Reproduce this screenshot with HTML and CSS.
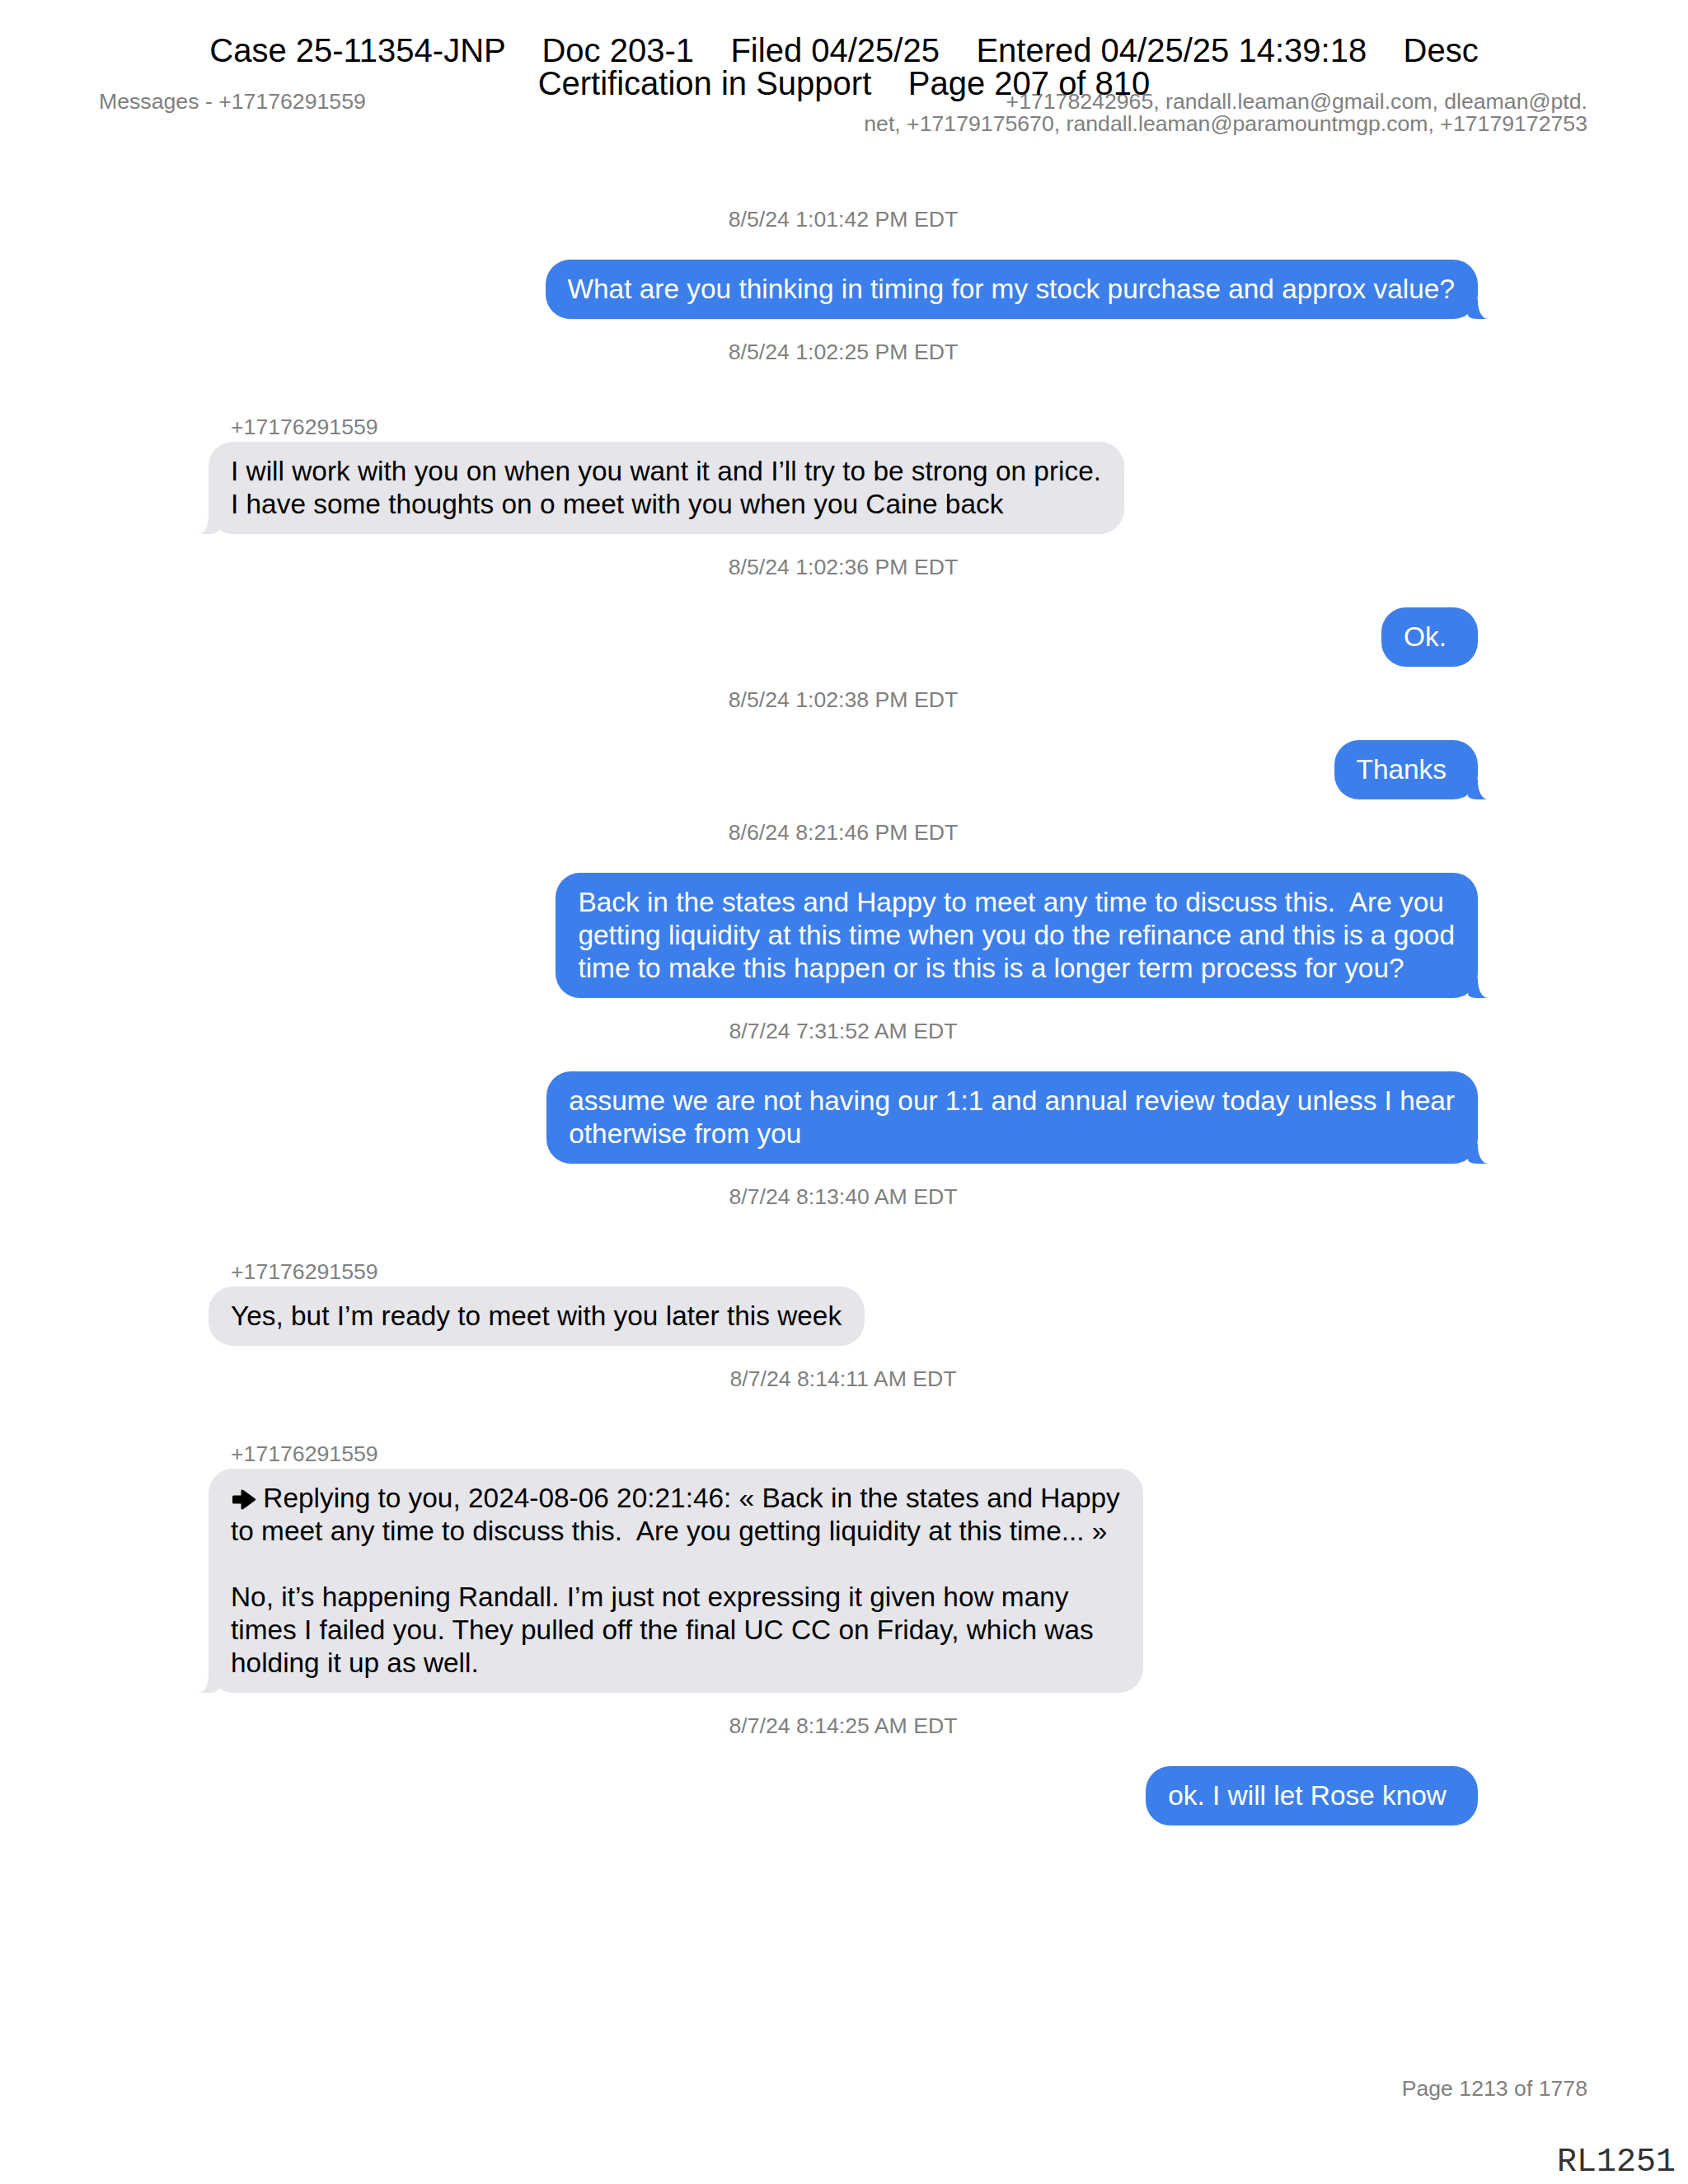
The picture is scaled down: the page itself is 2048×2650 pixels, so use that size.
FILE: index.html
```html
<!DOCTYPE html>
<html lang="en">
<head>
<meta charset="utf-8">
<title>Messages - +17176291559</title>
<link rel="stylesheet" href="styles.css">
</head>
<body>
<div class="page">
  <div class="stamp">
    <div class="stamp-line">Case 25-11354-JNP    Doc 203-1    Filed 04/25/25    Entered 04/25/25 14:39:18    Desc</div>
    <div class="stamp-line">Certification in Support    Page 207 of 810</div>
  </div>

  <header class="thread-head">
    <div class="thread-title">Messages - +17176291559</div>
    <div class="thread-contacts">+17178242965, randall.leaman@gmail.com, dleaman@ptd.<br>net, +17179175670, randall.leaman@paramountmgp.com, +17179172753</div>
  </header>

  <main class="chat">
    <div class="msg out">
      <div class="ts">8/5/24 1:01:42 PM EDT</div>
      <div class="bubble tail">What are you thinking in timing for my stock purchase and approx value?</div>
    </div>

    <div class="msg in">
      <div class="ts">8/5/24 1:02:25 PM EDT</div>
      <div class="sender">+17176291559</div>
      <div class="bubble tail">I will work with you on when you want it and I’ll try to be strong on price.<br>I have some thoughts on o meet with you when you Caine back</div>
    </div>

    <div class="msg out">
      <div class="ts">8/5/24 1:02:36 PM EDT</div>
      <div class="bubble trailing">Ok.</div>
    </div>

    <div class="msg out">
      <div class="ts">8/5/24 1:02:38 PM EDT</div>
      <div class="bubble tail trailing">Thanks</div>
    </div>

    <div class="msg out">
      <div class="ts">8/6/24 8:21:46 PM EDT</div>
      <div class="bubble tail">Back in the states and Happy to meet any time to discuss this.&nbsp; Are you<br>getting liquidity at this time when you do the refinance and this is a good<br>time to make this happen or is this is a longer term process for you?</div>
    </div>

    <div class="msg out">
      <div class="ts">8/7/24 7:31:52 AM EDT</div>
      <div class="bubble tail">assume we are not having our 1:1 and annual review today unless I hear<br>otherwise from you</div>
    </div>

    <div class="msg in">
      <div class="ts">8/7/24 8:13:40 AM EDT</div>
      <div class="sender">+17176291559</div>
      <div class="bubble">Yes, but I’m ready to meet with you later this week</div>
    </div>

    <div class="msg in">
      <div class="ts">8/7/24 8:14:11 AM EDT</div>
      <div class="sender">+17176291559</div>
      <div class="bubble tail"><svg class="reply-arrow" viewBox="0 0 28 25" width="28" height="25" aria-hidden="true"><path d="M1.5 9 H12 V2 L26.5 12.5 L12 23 V16 H1.5 Z" fill="#000" stroke="#000" stroke-width="3" stroke-linejoin="round"/></svg> Replying to you, 2024-08-06 20:21:46: « Back in the states and Happy<br>to meet any time to discuss this.&nbsp; Are you getting liquidity at this time... »<br><br>No, it’s happening Randall. I’m just not expressing it given how many<br>times I failed you. They pulled off the final UC CC on Friday, which was<br>holding it up as well.</div>
    </div>

    <div class="msg out">
      <div class="ts">8/7/24 8:14:25 AM EDT</div>
      <div class="bubble trailing">ok. I will let Rose know</div>
    </div>
  </main>

  <footer class="page-foot">
    <div class="page-num">Page 1213 of 1778</div>
    <div class="bates">RL1251</div>
  </footer>
</div>
</body>
</html>
```

FILE: styles.css
```css
html, body {
  margin: 0;
  padding: 0;
  background: #ffffff;
}

body {
  font-family: "Liberation Sans", Arial, sans-serif;
  color: #000000;
}

.page {
  position: relative;
  width: 2048px;
  min-height: 2650px;
  display: flex;
  flex-direction: column;
  padding-top: 110px;
  box-sizing: border-box;
}

/* court filing stamp laid over the page */
.stamp {
  position: absolute;
  top: 41px;
  left: 0;
  right: 0;
  text-align: center;
  font-size: 40px;
  line-height: 40px;
  color: #000000;
  z-index: 2;
}

.stamp-line {
  white-space: pre;
}

.thread-head {
  display: flex;
  justify-content: space-between;
  align-items: flex-start;
  padding: 0 122px 0 120px;
  font-size: 26.67px;
  line-height: 27px;
  color: #808080;
}

.thread-contacts {
  text-align: right;
  white-space: nowrap;
}

.chat {
  display: flex;
  flex-direction: column;
  margin: 86px 255px 0 253px;
}

.msg {
  display: flex;
  flex-direction: column;
}

.msg + .msg {
  margin-top: 24px;
}

.msg.out {
  align-items: flex-end;
}

.msg.in {
  align-items: flex-start;
}

.ts {
  align-self: center;
  font-size: 26.67px;
  line-height: 32px;
  color: #808080;
  white-space: nowrap;
}

.sender {
  margin-top: 59px;
  padding-left: 27px;
  font-size: 26.67px;
  line-height: 32px;
  color: #808080;
}

.bubble {
  position: relative;
  font-size: 33.4px;
  line-height: 40px;
  padding: 16px 28px 16px 27px;
  border-radius: 30px;
  white-space: nowrap;
}

.bubble.trailing {
  padding-right: 38px;
}

.msg.out .bubble {
  margin-top: 33px;
  background: #3d7fea;
  color: #ffffff;
}

.msg.in .bubble {
  margin-top: 2px;
  background: #e5e5ea;
  color: #000000;
}

/* bubble tails */
.bubble.tail::before,
.bubble.tail::after {
  content: "";
  position: absolute;
  bottom: 0;
  height: 24px;
}

.msg.out .bubble.tail::before {
  right: -12px;
  width: 24px;
  background: #3d7fea;
  border-bottom-left-radius: 10px 5px;
}

.msg.out .bubble.tail::after {
  right: -12px;
  width: 12px;
  background: #ffffff;
  border-bottom-left-radius: 12px 22px;
}

.msg.in .bubble.tail::before {
  left: -11px;
  width: 23px;
  background: #e5e5ea;
  border-bottom-right-radius: 10px 5px;
}

.msg.in .bubble.tail::after {
  left: -11px;
  width: 11px;
  background: #ffffff;
  border-bottom-right-radius: 11px 22px;
}

.reply-arrow {
  display: inline-block;
  vertical-align: -3px;
  margin-left: 2px;
}

.page-foot {
  margin-top: auto;
  padding-bottom: 6px;
  display: flex;
  flex-direction: column;
}

.page-num {
  text-align: right;
  padding-right: 122px;
  font-size: 26.67px;
  line-height: 32px;
  color: #808080;
}

.bates {
  margin-top: 54px;
  text-align: right;
  padding-right: 15px;
  font-family: "Courier New", "Nimbus Mono PS", "FreeMono", "Liberation Mono", monospace;
  font-size: 40px;
  line-height: 40px;
  color: #333333;
}
```
